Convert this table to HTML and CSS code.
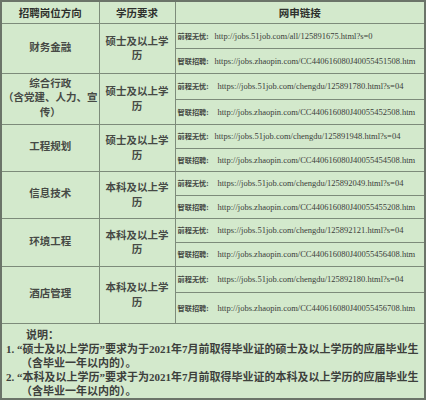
FILE: index.html
```html
<!DOCTYPE html>
<html lang="zh">
<head>
<meta charset="utf-8">
<title>招聘</title>
<link rel="stylesheet" href="styles.css">
</head>
<body>
<table class="jobs">
  <colgroup>
    <col class="c1"><col class="c2"><col class="c3">
  </colgroup>
  <tr class="head">
    <th>招聘岗位方向</th><th>学历要求</th><th>网申链接</th>
  </tr>
  <tr class="r25">
    <td rowspan="2" class="pos">财务金融</td>
    <td rowspan="2" class="edu">硕士及以上学历</td>
    <td class="link"><span class="lab">前程无忧:</span><span class="url">http://jobs.51job.com/all/125891675.html?s=0</span></td>
  </tr>
  <tr class="r25">
    <td class="link"><span class="lab">智联招聘:</span><span class="url">https://jobs.zhaopin.com/CC440616080J40055451508.htm</span></td>
  </tr>
  <tr class="r26">
    <td rowspan="2" class="pos">综合行政<br>（含党建、人力、宣<br>传）</td>
    <td rowspan="2" class="edu">硕士及以上学历</td>
    <td class="link"><span class="lab">前程无忧:</span><span class="url in">https://jobs.51job.com/chengdu/125891780.html?s=04</span></td>
  </tr>
  <tr class="r25">
    <td class="link"><span class="lab">智联招聘:</span><span class="url in">http://jobs.zhaopin.com/CC440616080J40055452508.htm</span></td>
  </tr>
  <tr class="r24">
    <td rowspan="2" class="pos">工程规划</td>
    <td rowspan="2" class="edu">硕士及以上学历</td>
    <td class="link"><span class="lab">前程无忧:</span><span class="url">https://jobs.51job.com/chengdu/125891948.html?s=04</span></td>
  </tr>
  <tr class="r23">
    <td class="link"><span class="lab">智联招聘:</span><span class="url in">http://jobs.zhaopin.com/CC440616080J40055454508.htm</span></td>
  </tr>
  <tr class="r24">
    <td rowspan="2" class="pos">信息技术</td>
    <td rowspan="2" class="edu">本科及以上学历</td>
    <td class="link"><span class="lab">前程无忧:</span><span class="url in">https://jobs.51job.com/chengdu/125892049.html?s=04</span></td>
  </tr>
  <tr class="r23">
    <td class="link"><span class="lab">智联招聘:</span><span class="url in">http://jobs.zhaopin.com/CC440616080J40055455208.htm</span></td>
  </tr>
  <tr class="r24">
    <td rowspan="2" class="pos">环境工程</td>
    <td rowspan="2" class="edu">本科及以上学历</td>
    <td class="link"><span class="lab">前程无忧:</span><span class="url in">https://jobs.51job.com/chengdu/125892121.html?s=04</span></td>
  </tr>
  <tr class="r24">
    <td class="link"><span class="lab">智联招聘:</span><span class="url in">http://jobs.zhaopin.com/CC440616080J40055456408.htm</span></td>
  </tr>
  <tr class="r26">
    <td rowspan="2" class="pos">酒店管理</td>
    <td rowspan="2" class="edu">本科及以上学历</td>
    <td class="link"><span class="lab">前程无忧:</span><span class="url in">https://jobs.51job.com/chengdu/125892180.html?s=04</span></td>
  </tr>
  <tr class="r31">
    <td class="link"><span class="lab">智联招聘:</span><span class="url in">http://jobs.zhaopin.com/CC440616080J40055456708.htm</span></td>
  </tr>
  <tr class="notes">
    <td colspan="3">
      <div class="title">说明：</div>
      <div>1. “硕士及以上学历”要求为于2021年7月前取得毕业证的硕士及以上学历的应届毕业生</div>
      <div class="cont">（含毕业一年以内的）。</div>
      <div>2. “本科及以上学历”要求于为2021年7月前取得毕业证的本科及以上学历的应届毕业生</div>
      <div class="cont">（含毕业一年以内的）。</div>
    </td>
  </tr>
</table>
</body>
</html>
```
FILE: styles.css
```css
html, body {
  margin: 0;
  padding: 0;
  background: #d3e9cc;
}
.jobs {
  width: 426px;
  height: 399px;
  border-collapse: collapse;
  border: 2px solid #6b7469;
  background: #d3e9cc;
  color: #262826;
  font-family: "Liberation Serif", "Noto Sans CJK SC", serif;
  table-layout: fixed;
}
.c1 { width: 98px; }
.c2 { width: 76px; }
.jobs th, .jobs td {
  border: 1px solid #7d8b7a;
  padding: 0;
}
.jobs .head { height: 22px; }
.jobs .head th {
  font-size: 10.5px;
  font-weight: bold;
  text-align: center;
  vertical-align: middle;
  color: #2e302d;
}
.r23 { height: 23px; }
.r24 { height: 24px; }
.r25 { height: 25px; }
.r26 { height: 26px; }
.r31 { height: 31px; }
.jobs .pos, .jobs .edu {
  text-align: center;
  vertical-align: middle;
  font-size: 10.5px;
  line-height: 14.5px;
  font-weight: bold;
  color: #464945;
}
.jobs .pos { padding: 0 1px; }
.jobs .edu { padding: 2px 4px 0; }
.jobs .link {
  font-size: 8.5px;
  white-space: nowrap;
  vertical-align: middle;
  padding-left: 2px;
}
.lab {
  display: inline-block;
  width: 37px;
  font-size: 7.2px;
  font-weight: bold;
  color: #454844;
}
.url {
  color: #3b3d3b;
}
.url.in {
  margin-left: 3px;
}
.jobs .notes td {
  vertical-align: top;
  font-size: 11px;
  line-height: 14px;
  padding: 4px 0 0 4px;
  font-weight: bold;
  color: #3d403c;
}
.notes .title { padding-left: 20px; }
.notes .cont { padding-left: 15px; }
```
